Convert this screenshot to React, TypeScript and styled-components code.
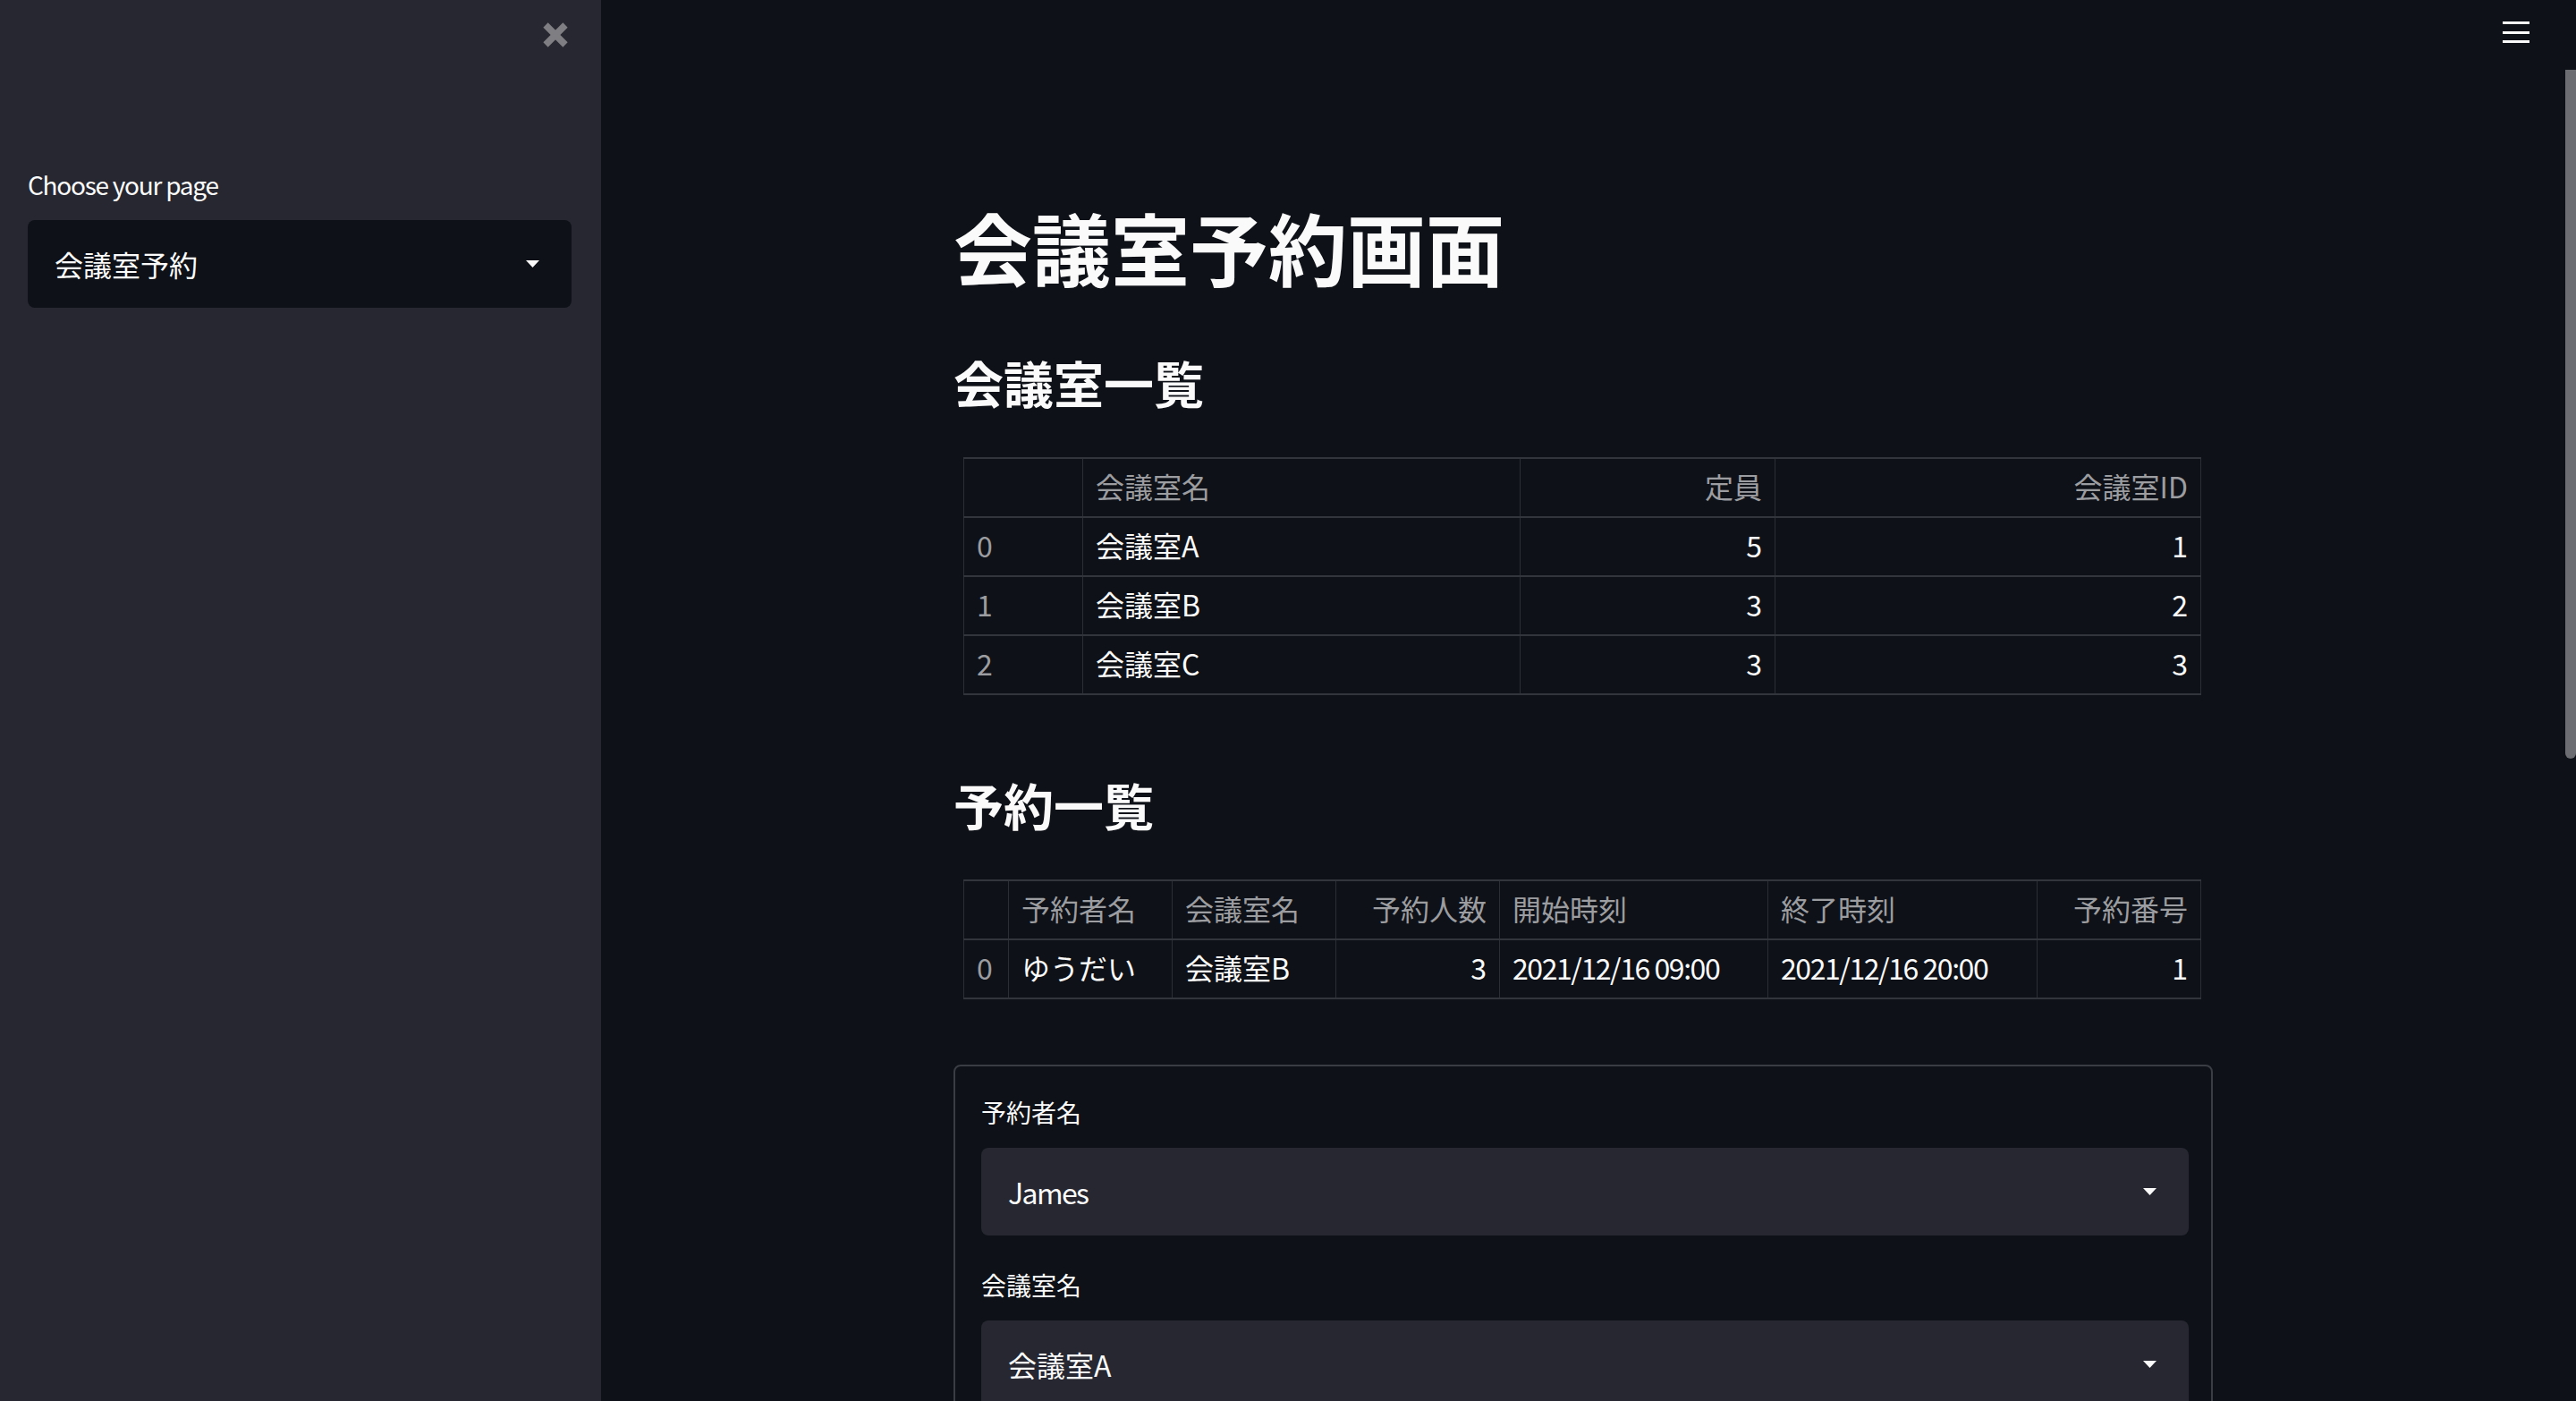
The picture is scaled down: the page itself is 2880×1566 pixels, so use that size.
import styled, { createGlobalStyle } from 'styled-components';

const GlobalStyle = createGlobalStyle`
  html, body {
    margin: 0;
    padding: 0;
    background: #0e1117;
    overflow: hidden;
  }
  body {
    font-family: 'Noto Sans CJK JP', 'Noto Sans', sans-serif;
    color: #fafafa;
  }
  * {
    box-sizing: border-box;
  }
`;

const rooms = [
  { name: '会議室A', capacity: 5, id: 1 },
  { name: '会議室B', capacity: 3, id: 2 },
  { name: '会議室C', capacity: 3, id: 3 },
];

const bookings = [
  {
    user: 'ゆうだい',
    room: '会議室B',
    people: 3,
    start: '2021/12/16 09:00',
    end: '2021/12/16 20:00',
    id: 1,
  },
];

function CloseIcon() {
  return (
    <svg width="30" height="30" viewBox="0 0 30 30">
      <line x1="4" y1="4" x2="26" y2="26" stroke="#7f7f83" strokeWidth="7.5" />
      <line x1="26" y1="4" x2="4" y2="26" stroke="#7f7f83" strokeWidth="7.5" />
    </svg>
  );
}

function Caret() {
  return (
    <svg width="15" height="8" viewBox="0 0 15 8">
      <polygon points="0,0 15,0 7.5,8" fill="#fafafa" />
    </svg>
  );
}

function MenuIcon() {
  return (
    <svg width="30" height="26" viewBox="0 0 30 26">
      <rect x="0" y="0" width="30" height="3" fill="#fafafa" />
      <rect x="0" y="11" width="30" height="3" fill="#fafafa" />
      <rect x="0" y="21" width="30" height="3" fill="#fafafa" />
    </svg>
  );
}

function SelectBox({
  value,
  dark,
  latin,
}: {
  value: string;
  dark?: boolean;
  latin?: boolean;
}) {
  return (
    <Select $dark={dark}>
      <SelectValue $latin={latin}>{value}</SelectValue>
      <Caret />
    </Select>
  );
}

export default function App() {
  return (
    <>
      <GlobalStyle />
      <Page>
        <Sidebar>
          <CloseRow>
            <CloseIcon />
          </CloseRow>
          <Label $first $latin>
            Choose your page
          </Label>
          <SelectBox value="会議室予約" dark />
        </Sidebar>

        <Main>
          <Toolbar>
            <MenuIcon />
          </Toolbar>
          <Content>
            <Title>会議室予約画面</Title>
            <SubHeader>会議室一覧</SubHeader>
            <Table>
              <colgroup>
                <col style={{ width: 133 }} />
                <col style={{ width: 489 }} />
                <col style={{ width: 285 }} />
                <col style={{ width: 476 }} />
              </colgroup>
              <thead>
                <tr>
                  <Th />
                  <Th>会議室名</Th>
                  <Th $right>定員</Th>
                  <Th $right>会議室ID</Th>
                </tr>
              </thead>
              <tbody>
                {rooms.map((r, i) => (
                  <tr key={r.id}>
                    <IndexCell>{i}</IndexCell>
                    <Td>{r.name}</Td>
                    <Td $right>{r.capacity}</Td>
                    <Td $right>{r.id}</Td>
                  </tr>
                ))}
              </tbody>
            </Table>

            <SubHeader $second>予約一覧</SubHeader>
            <Table>
              <colgroup>
                <col style={{ width: 50 }} />
                <col style={{ width: 183 }} />
                <col style={{ width: 183 }} />
                <col style={{ width: 183 }} />
                <col style={{ width: 300 }} />
                <col style={{ width: 301 }} />
                <col style={{ width: 183 }} />
              </colgroup>
              <thead>
                <tr>
                  <Th />
                  <Th>予約者名</Th>
                  <Th>会議室名</Th>
                  <Th $right>予約人数</Th>
                  <Th>開始時刻</Th>
                  <Th>終了時刻</Th>
                  <Th $right>予約番号</Th>
                </tr>
              </thead>
              <tbody>
                {bookings.map((b, i) => (
                  <tr key={b.id}>
                    <IndexCell>{i}</IndexCell>
                    <Td>{b.user}</Td>
                    <Td>{b.room}</Td>
                    <Td $right>{b.people}</Td>
                    <Td $latin>{b.start}</Td>
                    <Td $latin>{b.end}</Td>
                    <Td $right>{b.id}</Td>
                  </tr>
                ))}
              </tbody>
            </Table>

            <Form>
              <Label $first>予約者名</Label>
              <SelectBox value="James" latin />
              <Label>会議室名</Label>
              <SelectBox value="会議室A" />
            </Form>
          </Content>
          <ScrollThumb />
        </Main>
      </Page>
    </>
  );
}

const Page = styled.div`
  display: flex;
  width: 2880px;
  height: 1566px;
  overflow: hidden;
`;

const Sidebar = styled.aside`
  flex: 0 0 672px;
  background: #262730;
  padding: 24px 33px 0 31px;
  display: flex;
  flex-direction: column;
`;

const CloseRow = styled.div`
  display: flex;
  justify-content: flex-end;
  margin-right: 3px;
  height: 30px;
`;

const Label = styled.div<{ $first?: boolean; $latin?: boolean }>`
  font-size: 28px;
  line-height: 40px;
  color: #fafafa;
  letter-spacing: ${(p) => (p.$latin ? '-0.045em' : '0')};
  margin-top: ${(p) => (p.$first ? '0' : '35px')};
  margin-bottom: 20px;
  ${CloseRow} + & {
    margin-top: 132px;
  }
`;

const Select = styled.div<{ $dark?: boolean }>`
  height: 98px;
  border-radius: 8px;
  background: ${(p) => (p.$dark ? '#0e1117' : '#262730')};
  display: flex;
  align-items: center;
  justify-content: space-between;
  padding: 0 36px 0 30px;
`;

const SelectValue = styled.span<{ $latin?: boolean }>`
  font-size: 32px;
  color: #fafafa;
  letter-spacing: ${(p) => (p.$latin ? '-0.05em' : '0')};
`;

const Main = styled.main`
  flex: 1;
  position: relative;
  display: flex;
  flex-direction: column;
  padding-right: 12px;
`;

const Toolbar = styled.div`
  display: flex;
  justify-content: flex-end;
  padding: 24px 40px 0 0;
  height: 70px;
`;

const Content = styled.div`
  width: 1408px;
  margin: 0 auto;
  padding-top: 172px;
`;

const Title = styled.h1`
  margin: 0;
  font-size: 88px;
  line-height: 1.2;
  font-weight: 700;
  color: #fafafa;
`;

const SubHeader = styled.h3<{ $second?: boolean }>`
  margin: ${(p) => (p.$second ? '88px' : '65px')} 0 51px;
  font-size: 56px;
  line-height: 1.2;
  font-weight: 700;
  color: #fafafa;
`;

const Table = styled.table`
  width: 1383px;
  margin: 0 13px 0 11px;
  border-collapse: collapse;
  table-layout: fixed;
  font-size: 32px;
  color: #fafafa;
  border-top: 2px solid #33353c;
`;

const Th = styled.th<{ $right?: boolean }>`
  height: 66px;
  padding: 0 14px 3px;
  font-weight: 400;
  color: #9c9da0;
  text-align: ${(p) => (p.$right ? 'right' : 'left')};
  border-bottom: 2px solid #33353c;
  border-left: 1px solid #2c2e35;
  border-right: 1px solid #2c2e35;
  white-space: nowrap;
`;

const Td = styled.td<{ $right?: boolean; $latin?: boolean }>`
  height: 66px;
  padding: 0 14px 3px;
  text-align: ${(p) => (p.$right ? 'right' : 'left')};
  letter-spacing: ${(p) => (p.$latin ? '-0.045em' : '0')};
  border-bottom: 2px solid #33353c;
  border-left: 1px solid #2c2e35;
  border-right: 1px solid #2c2e35;
  white-space: nowrap;
`;

const IndexCell = styled(Td)`
  color: #9c9da0;
`;

const Form = styled.div`
  margin-top: 73px;
  border: 2px solid #3b3d44;
  border-radius: 8px;
  padding: 31px 25px 40px 29px;
`;

const ScrollThumb = styled.div`
  position: absolute;
  right: 0;
  top: 78px;
  width: 12px;
  height: 770px;
  background: #6c6d72;
  border-radius: 0 0 6px 6px;
`;
